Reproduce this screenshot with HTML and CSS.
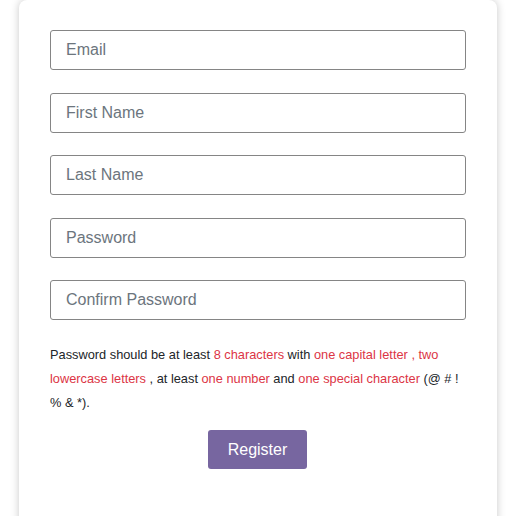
FILE: index.html
```html
<!DOCTYPE html>
<html>
<head>
<meta charset="utf-8">
<link rel="stylesheet" href="styles.css">
</head>
<body>
<div class="card">
  <form class="form">
    <input class="field" type="email" placeholder="Email">
    <input class="field" type="text" placeholder="First Name">
    <input class="field" type="text" placeholder="Last Name">
    <input class="field" type="password" placeholder="Password">
    <input class="field" type="password" placeholder="Confirm Password">
    <p class="hint">Password should be at least <span class="req">8 characters</span> with <span class="req">one capital letter , two lowercase letters</span> , at least <span class="req">one number</span> and <span class="req">one special character</span> (@ # ! % &amp; *).</p>
    <div class="actions"><button type="button" class="btn">Register</button></div>
  </form>
</div>
</body>
</html>
```
FILE: styles.css
```css
html, body {
  margin: 0;
  padding: 0;
  background: #fff;
  font-family: "Liberation Sans", Arial, sans-serif;
  overflow: hidden;
}
.card {
  margin-left: 19px;
  width: 478px;
  height: 530px;
  box-sizing: border-box;
  padding: 30px 31px;
  background: #fff;
  border-radius: 8px;
  box-shadow: 0 0 8px rgba(0, 0, 0, 0.22);
}
.form {
  display: flex;
  flex-direction: column;
}
.field {
  display: block;
  box-sizing: border-box;
  width: 416px;
  height: 40px;
  margin: 0 0 22.5px 0;
  padding: 0 15px;
  border: 1px solid #858585;
  border-radius: 3px;
  font-family: "Liberation Sans", Arial, sans-serif;
  font-size: 16px;
  color: #333;
  outline: none;
}
.field::placeholder {
  color: #6c757d;
  opacity: 1;
}
.hint {
  margin: 0.5px 0 0 0;
  font-size: 12.8px;
  line-height: 24px;
  color: #212529;
}
.req {
  color: #dc3545;
}
.actions {
  display: flex;
  justify-content: center;
  margin-top: 15px;
}
.btn {
  width: 99px;
  height: 39px;
  margin-right: 1px;
  border: none;
  border-radius: 3px;
  background: #7766a0;
  color: #fff;
  font-family: "Liberation Sans", Arial, sans-serif;
  font-size: 16px;
  cursor: pointer;
}
```
